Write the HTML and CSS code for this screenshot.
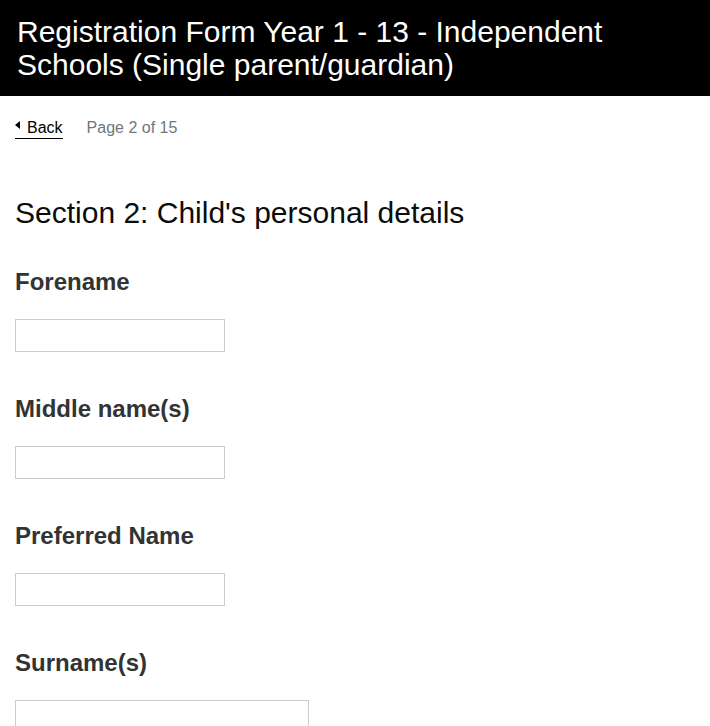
FILE: index.html
```html
<!DOCTYPE html>
<html lang="en">
<head>
<meta charset="utf-8">
<title>Registration Form</title>
<link rel="stylesheet" href="styles.css">
</head>
<body>
<header class="banner">
  <h1 class="banner-title">Registration Form Year 1 - 13 - Independent Schools (Single parent/guardian)</h1>
</header>
<main class="content">
  <nav class="pager">
    <a class="back-link" href="#"><span class="back-arrow"></span>Back</a>
    <span class="page-count">Page 2 of 15</span>
  </nav>
  <h2 class="section-title">Section 2: Child's personal details</h2>
  <div class="field">
    <label class="field-label" for="forename">Forename</label>
    <input class="field-input" id="forename" type="text">
  </div>
  <div class="field">
    <label class="field-label" for="middle">Middle name(s)</label>
    <input class="field-input" id="middle" type="text">
  </div>
  <div class="field">
    <label class="field-label" for="preferred">Preferred Name</label>
    <input class="field-input" id="preferred" type="text">
  </div>
  <div class="field">
    <label class="field-label" for="surname">Surname(s)</label>
    <input class="field-input field-input-wide" id="surname" type="text">
  </div>
</main>
</body>
</html>
```

FILE: styles.css
```css
html, body {
  margin: 0;
  padding: 0;
  background: #ffffff;
}

body {
  font-family: "Liberation Sans", Arial, Helvetica, sans-serif;
  color: #0b0c0c;
}

.banner {
  background: #000000;
  padding: 15px 16px 15px 17px;
  height: 66px;
}

.banner-title {
  margin: 0;
  color: #ffffff;
  font-size: 30px;
  font-weight: normal;
  line-height: 33px;
}

.content {
  padding: 0 15px;
}

.pager {
  display: flex;
  align-items: baseline;
  gap: 24px;
  padding-top: 22px;
  font-size: 16px;
  line-height: 20px;
}

.back-link {
  color: #000000;
  text-decoration: none;
  border-bottom: 1px solid #000000;
}

.back-arrow {
  display: inline-block;
  width: 0;
  height: 0;
  border-top: 4px solid transparent;
  border-bottom: 4px solid transparent;
  border-right: 5px solid #000000;
  margin-right: 7px;
  vertical-align: 4px;
}

.page-count {
  color: #6f777b;
}

.section-title {
  margin: 57px 0 0 0;
  font-size: 30px;
  font-weight: normal;
  line-height: 34px;
  color: #0b0c0c;
}

.field {
  display: flex;
  flex-direction: column;
  align-items: flex-start;
}

.field-label {
  margin-top: 38px;
  font-size: 24px;
  font-weight: bold;
  line-height: 28px;
  color: #333333;
}

.field + .field .field-label {
  margin-top: 43px;
}

.field-input {
  margin: 23px 0 0 0;
  box-sizing: border-box;
  width: 210px;
  height: 33px;
  border: 1px solid #cccccc;
  padding: 4px;
  font-family: inherit;
  font-size: 16px;
  background: #ffffff;
}

.field-input-wide {
  width: 294px;
}
```
